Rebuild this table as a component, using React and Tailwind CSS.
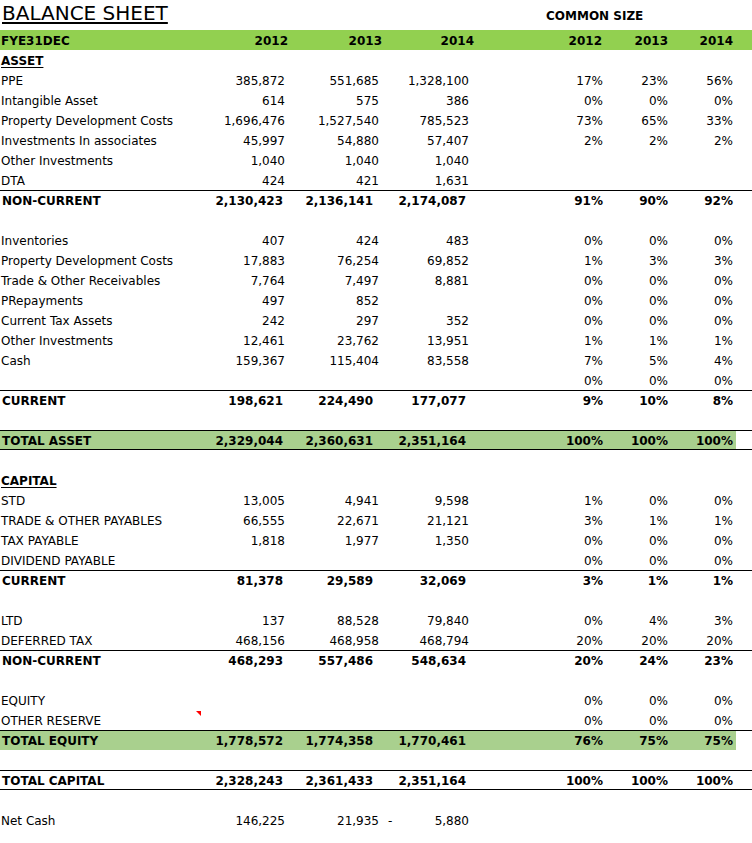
import React from 'react';

const GRID = 'grid grid-cols-[201px_88px_94px_92px_68px_64px_65px_65px_15px] h-5';

const rows = [
    { label: 'ASSET', head: true },
    { label: 'PPE', v: ['385,872', '551,685', '1,328,100'], p: ['17%', '23%', '56%'] },
    { label: 'Intangible Asset', v: ['614', '575', '386'], p: ['0%', '0%', '0%'] },
    { label: 'Property Development Costs', v: ['1,696,476', '1,527,540', '785,523'], p: ['73%', '65%', '33%'] },
    { label: 'Investments In associates', v: ['45,997', '54,880', '57,407'], p: ['2%', '2%', '2%'] },
    { label: 'Other Investments', v: ['1,040', '1,040', '1,040'] },
    { label: 'DTA', v: ['424', '421', '1,631'] },
    { label: 'NON-CURRENT', bold: true, top: true, v: ['2,130,423', '2,136,141', '2,174,087'], p: ['91%', '90%', '92%'] },
    {},
    { label: 'Inventories', v: ['407', '424', '483'], p: ['0%', '0%', '0%'] },
    { label: 'Property Development Costs', v: ['17,883', '76,254', '69,852'], p: ['1%', '3%', '3%'] },
    { label: 'Trade & Other Receivables', v: ['7,764', '7,497', '8,881'], p: ['0%', '0%', '0%'] },
    { label: 'PRepayments', v: ['497', '852', ''], p: ['0%', '0%', '0%'] },
    { label: 'Current Tax Assets', v: ['242', '297', '352'], p: ['0%', '0%', '0%'] },
    { label: 'Other Investments', v: ['12,461', '23,762', '13,951'], p: ['1%', '1%', '1%'] },
    { label: 'Cash', v: ['159,367', '115,404', '83,558'], p: ['7%', '5%', '4%'] },
    { p: ['0%', '0%', '0%'] },
    { label: 'CURRENT', bold: true, top: true, v: ['198,621', '224,490', '177,077'], p: ['9%', '10%', '8%'] },
    {},
    { label: 'TOTAL ASSET', bold: true, top: true, bottom: true, green: true, v: ['2,329,044', '2,360,631', '2,351,164'], p: ['100%', '100%', '100%'] },
    {},
    { label: 'CAPITAL', head: true },
    { label: 'STD', v: ['13,005', '4,941', '9,598'], p: ['1%', '0%', '0%'] },
    { label: 'TRADE & OTHER PAYABLES', v: ['66,555', '22,671', '21,121'], p: ['3%', '1%', '1%'] },
    { label: 'TAX PAYABLE', v: ['1,818', '1,977', '1,350'], p: ['0%', '0%', '0%'] },
    { label: 'DIVIDEND PAYABLE', p: ['0%', '0%', '0%'] },
    { label: 'CURRENT', bold: true, top: true, v: ['81,378', '29,589', '32,069'], p: ['3%', '1%', '1%'] },
    {},
    { label: 'LTD', v: ['137', '88,528', '79,840'], p: ['0%', '4%', '3%'] },
    { label: 'DEFERRED TAX', v: ['468,156', '468,958', '468,794'], p: ['20%', '20%', '20%'] },
    { label: 'NON-CURRENT', bold: true, top: true, v: ['468,293', '557,486', '548,634'], p: ['20%', '24%', '23%'] },
    {},
    { label: 'EQUITY', p: ['0%', '0%', '0%'] },
    { label: 'OTHER RESERVE', marker: true, p: ['0%', '0%', '0%'] },
    { label: 'TOTAL EQUITY', bold: true, top: true, green: true, v: ['1,778,572', '1,774,358', '1,770,461'], p: ['76%', '75%', '75%'] },
    {},
    { label: 'TOTAL CAPITAL', bold: true, top: true, bottom: true, v: ['2,328,243', '2,361,433', '2,351,164'], p: ['100%', '100%', '100%'] },
    {},
];

const regPad = ['pr-[4px]', 'pr-[4px]', 'pr-[6px]'];
const boldPad = ['pr-[6px]', 'pr-[10px]', 'pr-[9px]'];

const Row = ({ r }) => {
    let line = '';
    if (r.top && r.bottom) line = 'shadow-[inset_0_1px_0_#000,inset_0_-1px_0_#000]';
    else if (r.top) line = 'shadow-[inset_0_1px_0_#000]';

    return (
        <div className={`${GRID} ${line} ${r.green ? 'bg-[linear-gradient(to_right,#a9d08e_736px,transparent_736px)]' : ''} ${r.bold ? 'font-bold' : ''}`}>
            <div className={`relative whitespace-nowrap ${r.bold ? 'pl-[2px]' : 'pl-px'} ${r.head ? 'font-bold underline underline-offset-[2px]' : ''}`}>
                {r.label}
                {r.marker && (
                    <span className="absolute right-0 top-px w-0 h-0 border-t-[5px] border-t-[#ff0000] border-l-[5px] border-l-transparent" />
                )}
            </div>
            {[0, 1, 2].map((i) => (
                <div key={i} className={`text-right ${r.bold ? boldPad[i] : regPad[i]}`}>{r.v ? r.v[i] : ''}</div>
            ))}
            <div />
            {[0, 1, 2].map((i) => (
                <div key={i} className="text-right pr-[4px]">{r.p ? r.p[i] : ''}</div>
            ))}
            <div />
        </div>
    );
};

export default function App() {
    return (
        <div className="w-[752px] h-[843px] bg-white text-black text-[12px] leading-[22px] font-['DejaVu_Sans',sans-serif] overflow-hidden">
            <div className="grid grid-cols-[543px_209px] h-[30px]">
                <div className="pl-[2px] pt-[3px] text-[20px] leading-[20px] underline underline-offset-[2px]">BALANCE SHEET</div>
                <div className="pl-[3px] pt-[6px] font-bold leading-[20px]">COMMON SIZE</div>
            </div>

            <div className={`${GRID} bg-[#92d050] font-bold`}>
                <div className="pl-px">FYE31DEC</div>
                <div className="text-right pr-px">2012</div>
                <div className="text-right pr-px">2013</div>
                <div className="text-right pr-px">2014</div>
                <div />
                <div className="text-right pr-[5px]">2012</div>
                <div className="text-right pr-[4px]">2013</div>
                <div className="text-right pr-[4px]">2014</div>
                <div />
            </div>

            {rows.map((r, idx) => (
                <Row key={idx} r={r} />
            ))}

            <div className={GRID}>
                <div className="pl-px">Net Cash</div>
                <div className="text-right pr-[4px]">146,225</div>
                <div className="text-right pr-[4px]">21,935</div>
                <div className="flex justify-between pl-[5px] pr-[6px]">
                    <span>-</span>
                    <span>5,880</span>
                </div>
                <div />
                <div />
                <div />
                <div />
                <div />
            </div>
        </div>
    );
}
